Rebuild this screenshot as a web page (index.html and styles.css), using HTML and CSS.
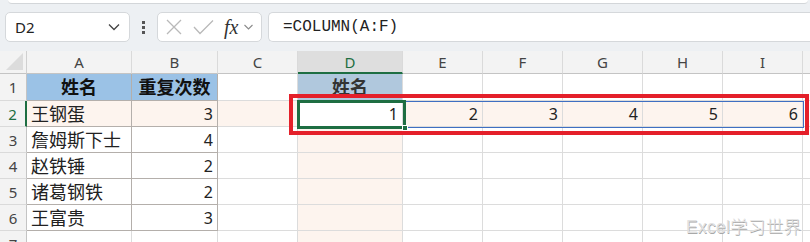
FILE: index.html
```html
<!DOCTYPE html>
<html lang="zh-CN">
<head>
    <meta charset="UTF-8">
    <title>COLUMN</title>
    <link rel="stylesheet" href="styles.css">
</head>
<body>

<div class="ribbon"></div>

<div class="fbar">
    <div class="namebox">
        <span>D2</span>
        <svg class="chev" width="12" height="8" viewBox="0 0 12 8"><polyline points="1,1.5 6,6.5 11,1.5" fill="none" stroke="#444" stroke-width="1.3"/></svg>
    </div>
    <div class="grip"><i></i><i></i><i></i></div>
    <div class="fnbox">
        <svg width="16" height="16" viewBox="0 0 16 16"><path d="M1 1 L15 15 M15 1 L1 15" stroke="#b9b9b9" stroke-width="1.3" fill="none"/></svg>
        <svg width="21" height="16" viewBox="0 0 21 16"><polyline points="1,8 7,14.5 20,1.5" stroke="#b9b9b9" stroke-width="1.3" fill="none"/></svg>
        <span class="fx">fx</span>
        <svg width="9" height="6" viewBox="0 0 9 6"><polyline points="0.5,1 4.5,5 8.5,1" fill="none" stroke="#8a8a8a" stroke-width="1.1"/></svg>
    </div>
    <div class="formula">=COLUMN(A:F)</div>
</div>

<div class="sheet">
    <div class="grid">
        <!-- column headers -->
        <div class="corner"></div>
        <div class="ch">A</div>
        <div class="ch">B</div>
        <div class="ch">C</div>
        <div class="ch on">D</div>
        <div class="ch">E</div>
        <div class="ch">F</div>
        <div class="ch">G</div>
        <div class="ch">H</div>
        <div class="ch">I</div>
        <div class="ch"></div>

        <!-- 1 -->
        <div class="rh">1</div>
        <div class="c tb head">姓名</div>
        <div class="c tb head">重复次数</div>
        <div class="c"></div>
        <div class="c head dhead">姓名</div>
        <div class="c"></div>
        <div class="c"></div>
        <div class="c"></div>
        <div class="c"></div>
        <div class="c"></div>
        <div class="c"></div>

        <!-- 2 -->
        <div class="rh on">2</div>
        <div class="c tb hl">王钢蛋</div>
        <div class="c tb hl num">3</div>
        <div class="c hl"></div>
        <div class="c num act">1</div>
        <div class="c hl num">2</div>
        <div class="c hl num">3</div>
        <div class="c hl num">4</div>
        <div class="c hl num">5</div>
        <div class="c hl num">6</div>
        <div class="c"></div>

        <!-- 3 -->
        <div class="rh">3</div>
        <div class="c tb">詹姆斯下士</div>
        <div class="c tb num">4</div>
        <div class="c"></div>
        <div class="c hl"></div>
        <div class="c"></div>
        <div class="c"></div>
        <div class="c"></div>
        <div class="c"></div>
        <div class="c"></div>
        <div class="c"></div>

        <!-- 4 -->
        <div class="rh">4</div>
        <div class="c tb">赵铁锤</div>
        <div class="c tb num">2</div>
        <div class="c"></div>
        <div class="c hl"></div>
        <div class="c"></div>
        <div class="c"></div>
        <div class="c"></div>
        <div class="c"></div>
        <div class="c"></div>
        <div class="c"></div>

        <!-- 5 -->
        <div class="rh">5</div>
        <div class="c tb">诸葛钢铁</div>
        <div class="c tb num">2</div>
        <div class="c"></div>
        <div class="c hl"></div>
        <div class="c"></div>
        <div class="c"></div>
        <div class="c"></div>
        <div class="c"></div>
        <div class="c"></div>
        <div class="c"></div>

        <!-- 6 -->
        <div class="rh">6</div>
        <div class="c tb">王富贵</div>
        <div class="c tb num">3</div>
        <div class="c"></div>
        <div class="c hl"></div>
        <div class="c"></div>
        <div class="c"></div>
        <div class="c"></div>
        <div class="c"></div>
        <div class="c"></div>
        <div class="c"></div>

        <!-- 7 -->
        <div class="rh">7</div>
        <div class="c"></div>
        <div class="c"></div>
        <div class="c"></div>
        <div class="c hl"></div>
        <div class="c"></div>
        <div class="c"></div>
        <div class="c"></div>
        <div class="c"></div>
        <div class="c"></div>
        <div class="c"></div>
    </div>

    <!-- overlays -->
    <div class="spill"></div>
    <div class="active"><i class="handle"></i></div>
    <div class="redbox"></div>
    <div class="mark">Excel学习世界</div>
</div>

</body>
</html>
```

FILE: styles.css
```css
*{
    margin:0;
    padding:0;
    box-sizing:border-box;
}

body {
    width:810px;
    height:242px;
    overflow:hidden;
    background:#edf0f3;
    font-family:"Noto Sans","Noto Sans CJK SC",sans-serif;
    color:#222;
}

/* ribbon edge + formula bar */
.ribbon {
    height:4px;
    margin:0 2px 0 8px;
    background:#fff;
    border-bottom:1px solid #d3d6d9;
    border-radius:0 0 5px 5px;
}
.fbar {
    display:flex;
    align-items:center;
    height:47px;
    padding:8px 0 9px 5px;
}
.namebox,.fnbox,.formula {
    height:30px;
    background:#fff;
    border:1px solid #d5d8db;
    border-radius:5px;
}
.namebox {
    width:125px;
    display:flex;
    align-items:center;
    justify-content:space-between;
    padding:0 9px 0 9px;
    font-size:15px;
    color:#222;
}
.grip {
    width:27px;
    display:flex;
    flex-direction:column;
    align-items:center;
    gap:2px;
}
.grip i {
    width:3px;
    height:3px;
    background:#555;
}
.fnbox {
    width:105px;
    display:flex;
    align-items:center;
    padding:0 0 0 8px;
}
.fnbox svg:nth-child(2) {
    margin-left:11px;
}
.fx {
    margin-left:10px;
    font-family:"Liberation Serif",serif;
    font-style:italic;
    font-size:20px;
    color:#333;
    line-height:1;
}
.fnbox svg:last-child {
    margin-left:6px;
}
.formula {
    flex:1;
    margin-left:6px;
    border-right:none;
    border-radius:5px 0 0 5px;
    padding-left:14px;
    font-family:"Liberation Mono",monospace;
    font-size:16px;
    line-height:28px;
    color:#222;
}

/* sheet */
.sheet {
    position:relative;
    background:#fff;
}
.grid {
    display:grid;
    grid-template-columns:27px 105px 86px 80px 105px 80px 80px 80px 80px 80px 80px;
    grid-template-rows:23px 27px 26px 26px 26px 26px 26px 26px;
    height:191px;
    overflow:hidden;
}
.corner {
    position:relative;
    background:#f3f3f3;
    border-right:1px solid #d0d0d0;
    border-bottom:1px solid #c4c4c4;
}
.corner:after {
    content:"";
    position:absolute;
    right:3px;
    bottom:3px;
    border-left:17px solid transparent;
    border-bottom:17px solid #dcdcdc;
}
.ch {
    background:#f3f3f3;
    border-right:1px solid #dadada;
    border-bottom:1px solid #c4c4c4;
    text-align:center;
    font-size:15px;
    line-height:22px;
    color:#444;
}
.ch.on {
    background:#dedede;
    color:#1e6e42;
    border-bottom:2px solid #1e6e42;
}
.rh {
    background:#f3f3f3;
    border-right:1px solid #c4c4c4;
    border-bottom:1px solid #dadada;
    text-align:center;
    font-size:15px;
    line-height:27px;
    color:#444;
}
.rh.on {
    color:#1e6e42;
    border-right:2px solid #1e6e42;
}

.c {
    border-right:1px solid #dcdcdc;
    border-bottom:1px solid #dcdcdc;
    padding:0 4px;
    font-size:18px;
    line-height:26px;
    white-space:nowrap;
    overflow:hidden;
}
.c.tb {
    border-color:#b4afab;
}
.head {
    background:#9bc2e6;
    font-weight:bold;
    text-align:center;
    color:#111;
}
.dhead {
    background:#b0c8dd;
    color:#333;
}
.hl {
    background:#fdf4ee;
}
.num {
    text-align:right;
    font-size:16px;
}
.act {
    background:#fff;
}

/* overlays */
.spill {
    position:absolute;
    left:403px;
    top:50px;
    width:401px;
    height:27px;
    border:1.5px solid #3f6fc2;
}
.active {
    position:absolute;
    left:297px;
    top:49px;
    width:109px;
    height:29px;
    border:3px solid #1e6e42;
}
.handle {
    position:absolute;
    right:-5px;
    bottom:-5px;
    width:6px;
    height:6px;
    background:#1e6e42;
    border:1px solid #fff;
}
.redbox {
    position:absolute;
    left:289px;
    top:43px;
    width:520px;
    height:41px;
    border:4px solid #e4202a;
}
.mark {
    position:absolute;
    left:686px;
    top:162px;
    font-family:"Liberation Sans","Noto Sans CJK SC",sans-serif;
    font-size:17.5px;
    letter-spacing:0.3px;
    font-weight:300;
    color:#e2e2e2;
    text-shadow:0.5px 0.5px 0 #a8a8a8;
}
```
